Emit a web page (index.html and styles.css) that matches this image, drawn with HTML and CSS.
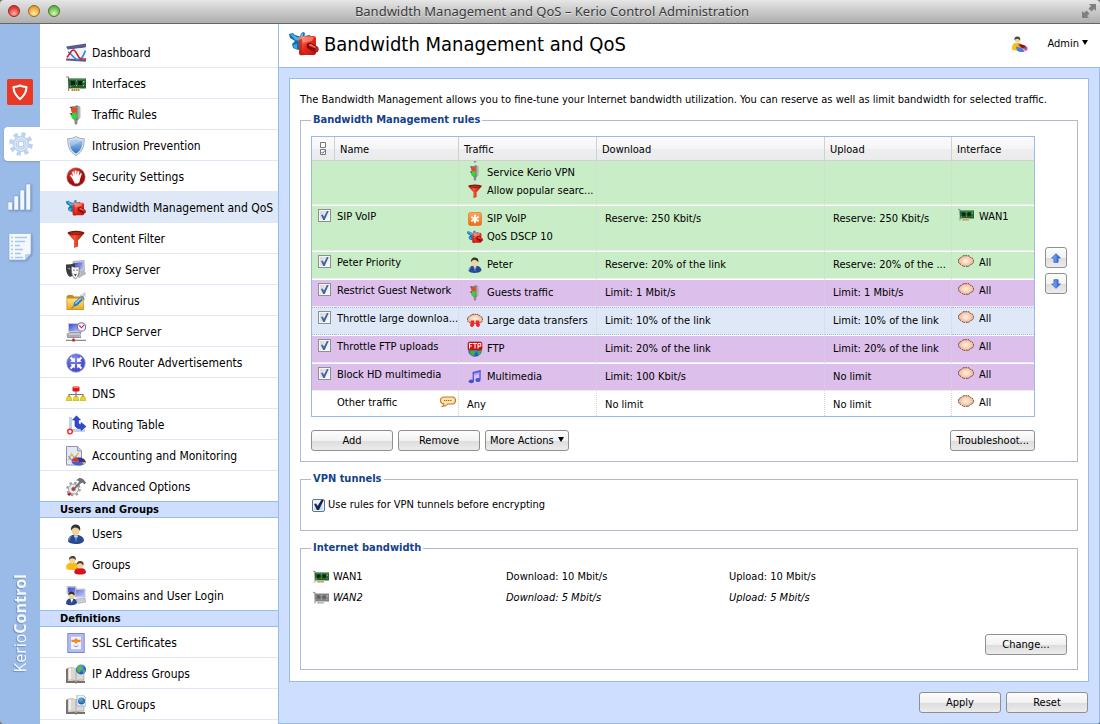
FILE: index.html
```html
<!DOCTYPE html>
<html lang="en">

<head>
  <meta charset="UTF-8" />
  <meta name="viewport" content="width=device-width, initial-scale=1.0" />
  <title>Bandwidth Management and QoS – Kerio Control Administration</title>
  <link rel="stylesheet" href="styles.css">
</head>

<body>
  <!-- icon sprite -->
  <svg class="sprite" aria-hidden="true">
    <defs>
      <linearGradient id="g-blue" x1="0" y1="0" x2="0" y2="1"><stop offset="0" stop-color="#a9cdf2" /><stop offset="1" stop-color="#2f6fbd" /></linearGradient>
      <linearGradient id="g-screen" x1="0" y1="0" x2="1" y2="1"><stop offset="0" stop-color="#3c46d8" /><stop offset="1" stop-color="#b9c4fa" /></linearGradient>
      <linearGradient id="g-red" x1="0" y1="0" x2="1" y2="1"><stop offset="0" stop-color="#ff8a70" /><stop offset=".5" stop-color="#e62a1c" /><stop offset="1" stop-color="#b80f0c" /></linearGradient>
      <linearGradient id="g-funnel" x1="0" y1="0" x2="1" y2="0"><stop offset="0" stop-color="#b01808" /><stop offset=".4" stop-color="#f4543a" /><stop offset="1" stop-color="#9c1204" /></linearGradient>
      <linearGradient id="g-pole" x1="0" y1="0" x2="1" y2="0"><stop offset="0" stop-color="#6e6e6e" /><stop offset="1" stop-color="#d8d8d8" /></linearGradient>
      <linearGradient id="g-folder" x1="0" y1="0" x2="0" y2="1"><stop offset="0" stop-color="#ffe58a" /><stop offset="1" stop-color="#f0a91e" /></linearGradient>
      <linearGradient id="g-orange" x1="0" y1="0" x2="0" y2="1"><stop offset="0" stop-color="#ffa85a" /><stop offset="1" stop-color="#ee6d0d" /></linearGradient>
      <linearGradient id="g-arrow" x1="0" y1="0" x2="1" y2="0"><stop offset="0" stop-color="#8fc0ff" /><stop offset="1" stop-color="#1d55d6" /></linearGradient>
      <radialGradient id="g-cloud"><stop offset="0" stop-color="#fff6ee" /><stop offset="1" stop-color="#f5b48c" /></radialGradient>
      <radialGradient id="g-stop" cx=".4" cy=".3"><stop offset="0" stop-color="#ee4a42" /><stop offset="1" stop-color="#a80b0b" /></radialGradient>
      <radialGradient id="g-violet" cx=".4" cy=".3"><stop offset="0" stop-color="#8a92f4" /><stop offset="1" stop-color="#4a50cc" /></radialGradient>
      <radialGradient id="g-globe" cx=".4" cy=".3"><stop offset="0" stop-color="#8fc4ff" /><stop offset="1" stop-color="#1f5fc8" /></radialGradient>
    </defs>

    <symbol id="i-dashboard" viewBox="0 0 20 20">
      <path d="M0 3.500 20 .5v4L2 7z" fill="#5a5c90" />
      <path d="M2 6.500 20 4.500v12L2 16z" fill="#f4f5fb" />
      <path d="M0 15.500 20 16.500v2.300L0 17.500z" fill="#5a5c90" />
      <path d="M2 9c4 1 5 7.500 10 7.500 4 0 5.500-4 7.500-9" fill="none" stroke="#2c8fd8" stroke-width="1.700" />
      <path d="M1 14.500C4 11 5 7 7.500 7s4 7 7 9H20" fill="none" stroke="#d3202c" stroke-width="1.700" />
    </symbol>

    <symbol id="i-card" viewBox="0 0 20 20">
      <path d="M0 3h2.500v14" fill="none" stroke="#8a8a8a" stroke-width="1.200" />
      <path d="M2 4.500h18v10H3z" fill="#24622f" />
      <path d="M3 5.200h16.500" stroke="#5fa266" stroke-width=".8" />
      <path d="M5 7h4v4H5zM12 7h4v4h-4z" fill="#0f2413" />
      <path d="M10 6.500h1v1h-1zM17 7h1.500v1.500H17zM10 11h1v1h-1zM17 11h1v1h-1zM4 12h1v1H4z" fill="#a9d27a" />
      <path d="M5 14h9v3H5z" fill="#d8c88c" />
      <path d="M6.500 14.500V17M8.500 14.500V17M10.500 14.500V17M12.500 14.500V17" stroke="#8c7a3c" stroke-width=".7" />
    </symbol>

    <symbol id="i-card-off" viewBox="0 0 20 20">
      <path d="M0 3h2.500v14" fill="none" stroke="#8a8a8a" stroke-width="1.200" />
      <path d="M2 4.500h18v10H3z" fill="#848484" />
      <path d="M5 7h4v4H5zM12 7h4v4h-4z" fill="#606060" />
      <path d="M10 6.500h1v1h-1zM17 7h1.500v1.500H17zM10 11h1v1h-1zM17 11h1v1h-1z" fill="#d0d0d0" />
      <path d="M5 14h9v3H5z" fill="#d4d4d4" />
      <path d="M6.500 14.500V17M8.500 14.500V17M10.500 14.500V17M12.500 14.500V17" stroke="#8a8a8a" stroke-width=".7" />
    </symbol>

    <symbol id="i-light" viewBox="0 0 20 20">
      <path d="M3.500 2 7 1.500v4zM3.500 8.500l3.500-1v4.500z" fill="#4a4a4a" />
      <path d="M6 1.500 11.500.5l1 2v12L9 16l-3-3z" fill="#8b8b8b" />
      <path d="m10.500.5 3.500 1.500v10.500L10.500 16z" fill="url(#g-pole)" stroke="#777" stroke-width=".5" />
      <path d="M8.500 15h3v3.500L9.700 20l-1.200-1.500z" fill="#8a8a8a" />
      <circle cx="7.800" cy="5" r="2.800" fill="#f5431d" />
      <circle cx="8.200" cy="11" r="2.900" fill="#2bdc2b" />
    </symbol>

    <symbol id="i-shield" viewBox="0 0 20 20">
      <path d="M10 .5c2.500 1.700 5 2.200 8.300 2.200 0 8-2 13.500-8.300 16.800C3.700 16.200 1.700 10.700 1.700 2.700 5 2.700 7.500 2.200 10 .5z" fill="#dce4ec" stroke="#8d9dae" stroke-width=".8" />
      <path d="M10 2.700c2 1.300 4 1.700 6.600 1.800-.2 6.500-1.900 10.500-6.600 13.100C5.300 15 3.600 11 3.400 4.500 6 4.400 8 4 10 2.700z" fill="url(#g-blue)" />
      <path d="M10 2.700c2 1.300 4 1.700 6.600 1.800L4.500 11C3.800 9 3.500 7 3.400 4.500 6 4.400 8 4 10 2.700z" fill="#fff" opacity=".25" />
    </symbol>

    <symbol id="i-hand" viewBox="0 0 20 20">
      <circle cx="10" cy="10" r="9.200" fill="url(#g-stop)" stroke="#8d8080" stroke-width=".6" />
      <path d="M6 11 4 8.600l1.300-1L7 9.500 6.100 4.700l1.600-.3 1.100 4-.1-5h1.700l.3 5 1-4.500 1.600.3-.5 4.800 1.700-3 1.400.8-1.900 5.300-.5 2.800-1.500 1.700H8.800z" fill="#fff" />
    </symbol>

    <symbol id="i-valve" viewBox="0 0 30 24">
      <path d="m0 2 4-1 2 2 5 1.500 1-3L14 0l2 1-.5 3 5-1 2 2v6L9 18l-5-2-1-4 3-3-5-3z" fill="#156fae" />
      <path d="m1.500 2.500 2-.5 4 3 5 1-1 3-5-1z" fill="#49b4e6" />
      <path d="m4 13 4-1v5l-3-1z" fill="#3fa5dc" />
      <path d="M12.500 1.500 14 1v5h-2z" fill="#5fc2ee" />
      <rect x="10" y="4" width="17" height="19" rx="2.500" fill="url(#g-red)" />
      <path d="M10 8v13.500q0 1.500 1.800 2l4-.5-3-3V6.500z" fill="#b3150f" opacity=".6" />
      <path d="M12 5h13l-2 4-9 2z" fill="#ffb39c" opacity=".5" />
      <path d="M18.500 11.500c2-1.500 4-.5 5 .5l5 2.500c1.500 1 1.500 4.500 0 5.500-1 .6-2 .3-3 0l-6-3c-2-1-2.500-4-1-5.500z" fill="#8d0a0c" />
      <path d="M20 12.500c2-1 3 0 4 .7l4 2-.6 1.500-7.400-3z" fill="#e4685c" />
      <ellipse cx="27.600" cy="17.200" rx="1.600" ry="2.500" fill="#b9251f" />
    </symbol>

    <symbol id="i-funnel" viewBox="0 0 20 20">
      <path d="M1.500 4 8 11.500V19l4-1.500v-6L18.500 4z" fill="url(#g-funnel)" />
      <ellipse cx="10" cy="3.800" rx="8.500" ry="2" fill="#7d1105" />
      <ellipse cx="10" cy="4.100" rx="6.500" ry="1" fill="#b52c18" />
    </symbol>

    <symbol id="i-proxy" viewBox="0 0 20 20">
      <path d="M7 1.500 18 .5l.5 10.500L8 12.500z" fill="#c9ccd4" stroke="#8b8f99" stroke-width=".6" />
      <path d="m8.500 3 8-.8.3 7.400-7.800 1z" fill="url(#g-screen)" />
      <path d="m11 14 7-2.500 2 2-7 4z" fill="#b9bcc6" stroke="#868992" stroke-width=".5" />
      <path d="M0 4.500q5 0 9-1.500v7c0 4-2 6-5 7-3-2-4.500-6-4-12.500z" fill="#3b3b42" />
      <path d="m1.500 8 2.500.5v1zM5.500 8.500 8 7.500l-2 2z" fill="#fff" />
      <path d="M5.500 6.500q4 1.500 7.500 0c.8 6-.4 10-3.500 12.500C6 16.500 4.800 12 5.500 6.500z" fill="#f7f7f9" stroke="#55555c" stroke-width=".7" />
      <path d="M6.800 9.800h2l-.6 1.200zM10.200 9.800h2L11 11zM7.800 13.500q1.600 1.300 3.200 0l-1.600 3z" fill="#2d2d33" />
    </symbol>

    <symbol id="i-antivirus" viewBox="0 0 20 20">
      <path d="M.5 5.500 2 4h4.500L8 5.500h10V19H.5z" fill="#c98a1a" />
      <path d="M1.200 7.500h16.300v10.800H1.200z" fill="url(#g-folder)" />
      <path d="m7 16 1.200-4.500L14 6l3 3-5.700 5.500z" fill="#2a7fc4" />
      <path d="m8.800 12 5.500-5.200 1 1-5.500 5.300z" fill="#9fd6f6" />
      <path d="M7 16 5.500 17.500M14.500 4.500l4 4M16.200 6l2.800-3.500" stroke="#7b8394" stroke-width="1.300" />
      <path d="m14 5 5-4.500 1 5z" fill="#c9d5f2" opacity=".9" />
    </symbol>

    <symbol id="i-dhcp" viewBox="0 0 20 20">
      <path d="M2 1h13v9H2z" fill="#c9ccd4" />
      <path d="M3 2h11v7H3z" fill="url(#g-screen)" />
      <path d="m1 12 3-1.500h11l-1 2.500 1 2.500H1.500z" fill="#c6c8ce" stroke="#77797f" stroke-width=".7" />
      <path d="M2 14h11" stroke="#8d8f96" />
      <path d="M7.500 15.500V18M0 18.300h20" stroke="#8a8a90" stroke-width="1.300" />
      <path d="M6.300 17h2.500v2.500H6.300z" fill="#d41e14" />
      <circle cx="15.500" cy="5" r="4.200" fill="#f3f4ff" stroke="#6a70b8" stroke-width="1.100" />
      <path d="m13.300 3.500 2.200 2.300 2.800-3" fill="none" stroke="#d8262a" stroke-width="1.100" />
    </symbol>

    <symbol id="i-ipv6" viewBox="0 0 20 20">
      <circle cx="10" cy="10" r="9.300" fill="url(#g-violet)" stroke="#a5a9d8" stroke-width=".8" />
      <path d="m9 9-4.500-.3 1.300-1.400-2-2L5.300 3.800l2 2 1.400-1.300zM11 9l.3-4.500 1.400 1.300 2-2 1.500 1.500-2 2 1.300 1.400zM9 11l-.3 4.500-1.400-1.300-2 2-1.500-1.500 2-2-1.300-1.400zM11 11l4.500.3-1.300 1.400 2 2-1.500 1.500-2-2-1.400 1.300z" fill="#fff" />
    </symbol>

    <symbol id="i-dns" viewBox="0 0 20 20">
      <path d="M10 6v8M3 13.500V10.500h14v3" fill="none" stroke="#77777c" stroke-width="1.200" />
      <rect x="6.500" y="2.500" width="7" height="5" rx="1.200" fill="#e0141a" />
      <path d="M7.500 3.500h5" stroke="#ff8c88" />
      <path d="M1.300 12.500h3.400l1.300 4H0zM8.300 12.500h3.400l1.300 4H7zM15.300 12.500h3.400l1.300 4h-6z" fill="#ecd91a" stroke="#b8a514" stroke-width=".6" />
    </symbol>

    <symbol id="i-routing" viewBox="0 0 20 20">
      <path d="M4.500 2v14M4 15.500h15" stroke="#c3d1ee" stroke-width="3" />
      <path d="M10.500.8 14.500 5h-2v3.500L15 10V7.500l5 4-5 4v-2h-3.500L9 11V5H6.500z" fill="#2f49d2" stroke="#1b2f9c" stroke-width=".6" />
      <circle cx="4" cy="16.500" r="2.300" fill="#fff" stroke="#ee2f2f" stroke-width="1.500" />
    </symbol>

    <symbol id="i-accounting" viewBox="0 0 20 20">
      <path d="M.5.500h11L15.500 5v14H.5z" fill="#e4e7f4" stroke="#8487a4" stroke-width=".9" />
      <path d="M11.500.5V5h4" fill="#cdd1e4" stroke="#8487a4" stroke-width=".8" />
      <path d="m2.500 14 3-6 3 4 4-5" fill="none" stroke="#d8be3a" stroke-width="1.400" />
      <path d="m2.500 10 3 4 4-3 4 2" fill="none" stroke="#7c86e8" stroke-width="1.200" />
      <path d="M5.500 15.500a7 4.500 0 0 1 6-4l1.500 4.500z" fill="#d83426" />
      <path d="M11.500 11.500c4-.5 8 1.500 8.500 5l-7-.5z" fill="#3b2f8c" />
      <path d="M5.500 15.500 13 16l7 .5c-1 2-4 3-7 3-4 0-7-1.500-7.500-4z" fill="#3a62d4" />
      <path d="m16 16.200 4 .3c-.5 1-1.200 1.600-2.300 2z" fill="#f0c62a" />
    </symbol>

    <symbol id="i-advanced" viewBox="0 0 20 20">
      <circle cx="7.500" cy="12" r="6.300" fill="none" stroke="#9a9a9a" stroke-width="2" stroke-dasharray="2.400 2.550" />
      <circle cx="7.500" cy="12" r="5" fill="#ececec" stroke="#8a8a8a" stroke-width=".8" />
      <circle cx="7.500" cy="12" r="1.900" fill="#d42b2b" stroke="#888" stroke-width=".8" />
      <path d="m10 3.500 3-2.500q3-.5 4.500 1.500l2.500 3-1.500 2-2-2-1.500.7-5.500 5.300-1.300-1.200 5-5.500-1.200-1.300z" fill="#707073" />
      <path d="m1 17 3-1.500 1.500 1.500L3 19z" fill="#b91717" />
    </symbol>

    <symbol id="i-user" viewBox="0 0 20 20">
      <path d="M2 17.500c0-4 2-6.500 6-6.500h3c4 0 7 2.500 7 6-1.500 2.500-5 3-8.500 3S3 19 2 17.500z" fill="#2a4a8c" />
      <path d="M8 11.500 10 17l2-5.500z" fill="#fff" />
      <path d="m9.500 12.500 1 0 .7 4-1.200 2-1-2z" fill="#2c7ad8" />
      <ellipse cx="9.500" cy="6.800" rx="4" ry="4.800" fill="#f3d39c" />
      <path d="M5 6.500C4.500 2.500 7 .3 10 .5c3.500.2 5 3 4 6.500-1-2.500-3-3.500-5-3.500-1.500.2-3 1.500-4 3z" fill="#30352f" />
      <path d="M3 16.500c0-2 .8-3.300 2.200-4" fill="none" stroke="#7fa4e4" />
    </symbol>

    <symbol id="i-groups" viewBox="0 0 22 21">
      <path d="M0 14c0-4 2-6 5.500-6H9c3 0 5 2 5 5.500-1 2-4 2.500-7 2.500s-6-.5-7-2z" fill="#f8bd16" />
      <circle cx="7" cy="5" r="3.600" fill="#f3d39c" />
      <path d="M3.300 4.800C3 2 5 .4 7.300.5c2.700.1 4.200 2 3.200 4.700-1-1.700-2.500-2.200-4-2.100-1.200.1-2.300.8-3.200 1.700z" fill="#3d403c" />
      <path d="M9 19c0-3.500 2-5 5-5h3c3 0 5 1.500 5 5-1 1.500-3.500 2-6.500 2S10 20.500 9 19z" fill="#d3151b" />
      <circle cx="15.500" cy="10.500" r="3.600" fill="#f3cfa0" />
      <path d="M11.700 10.500c-.3-2.800 1.600-4.600 4-4.500 2.800.1 4.500 2.200 3.300 5-1-1.800-2.500-2.400-4-2.300-1.300.1-2.400.8-3.300 1.800z" fill="#5a3c28" />
    </symbol>

    <symbol id="i-domains" viewBox="0 0 20 20">
      <path d="M1 .5h9v7H1zM9 3h10v8H9z" fill="#d4d7e0" stroke="#8e93a4" stroke-width=".5" />
      <path d="M2 1.500h7v5H2zM10 4h8v6h-8z" fill="url(#g-screen)" />
      <path d="m10 13 9-1 1 4-8 1.500z" fill="#c9ccd6" stroke="#9195a2" stroke-width=".5" />
      <path d="M0 17.500c0-3 1.500-5 4.500-5h2c3 0 4.500 2 4.500 4.500-1 1.800-3 2.200-5.500 2.200S1 19 0 17.500z" fill="#2a4a8c" />
      <path d="M4.300 12.800 5.800 17l1.400-4.200z" fill="#fff" />
      <circle cx="5.500" cy="9.500" r="3" fill="#f3d39c" />
      <path d="M2.300 9.500c-.2-2.500 1.300-4 3.400-3.900 2.400.1 3.600 1.900 2.800 4.200-1-1.300-2-1.800-3.300-1.700-1.100.1-2.100.6-2.900 1.400z" fill="#30352f" />
    </symbol>

    <symbol id="i-ssl" viewBox="0 0 19 22">
      <rect x=".5" y=".5" width="18" height="21" fill="#a9b3f2" stroke="#7480d0" />
      <rect x="2" y="2" width="15" height="18" fill="none" stroke="#d5dbff" stroke-dasharray="1 1" />
      <rect x="4" y="4" width="11" height="14" fill="#f1f3ff" />
      <path d="M4.500 7.500h3l2-2 2 2h3v2.500h-3l-2 2-2-2h-3z" fill="#f58a18" />
      <path d="m7 14 2.500 1.200L12 14" fill="none" stroke="#757ba8" stroke-width=".9" />
    </symbol>

    <symbol id="i-book" viewBox="0 0 20 20">
      <path d="m0 5 2-1v13l7-.5 1 1.500 1-1.500 8 .5v2H11l-1 .8-1-.8H0z" fill="#77726d" />
      <path d="M2 4q5-1.500 8 .8V17q-3-1.800-8-.8z" fill="#f2f0ec" stroke="#8c8782" stroke-width=".5" />
      <path d="M18 4q-5-1.500-8 .8V17q3-1.800 8-.8z" fill="#dcd8d2" stroke="#8c8782" stroke-width=".5" />
      <path d="M8 4.500v12M6 4v12" stroke="#bdb8b1" stroke-width=".9" />
    </symbol>

    <symbol id="i-ipgroups" viewBox="0 0 20 20">
      <use href="#i-book" width="20" height="20" />
      <circle cx="15" cy="5.500" r="5" fill="url(#g-globe)" />
      <path d="m12 2 3-1 1.500 2L14 5l.5 2.500L13 9l-2-3zM17 5.500l2.500.5-1.500 3.300-1.500-1z" fill="#58b83a" />
    </symbol>

    <symbol id="i-urlgroups" viewBox="0 0 20 20">
      <use href="#i-book" width="20" height="20" />
      <path d="M11 0h6l3 3v8h-9z" fill="#eef4ff" stroke="#7ea0d4" stroke-width=".7" />
      <circle cx="15.500" cy="6" r="3.500" fill="url(#g-globe)" />
      <path d="m13 4.500 2-1.500 1 1.500-1.500 1.500.3 2zM16.500 6.500l2 .2-1.500 2z" fill="#58b83a" />
    </symbol>

    <symbol id="i-sip" viewBox="0 0 16 16">
      <rect x="1.500" y="1.500" width="13" height="13" rx="2" fill="url(#g-orange)" stroke="#dd6a10" stroke-width=".6" />
      <path d="M8 3.800v8.400M4.300 5.900l7.400 4.200M4.300 10.100l7.400-4.200" stroke="#fff" stroke-width="1.800" />
    </symbol>

    <symbol id="i-cloud" viewBox="0 0 16 16">
      <path d="M3.300 4.500Q5 2 8 2.800q3-.8 4.700 1.700 2.900.7 2.800 3.500.1 2.800-2.800 3.500Q11 14 8 13.200 5 14 3.300 11.500.4 10.800.5 8 .4 5.200 3.300 4.500z" fill="url(#g-cloud)" stroke="#4e3c34" stroke-dasharray="1.600 .8" />
    </symbol>

    <symbol id="i-transfers" viewBox="0 0 16 16">
      <path d="M3.300 3Q5 .6 8 1.500q3-.9 4.700 1.500 2.900.7 2.800 3.500.1 2.800-2.800 3.300-4.700 1-9.400 0Q.4 9.300.5 6.500.4 3.700 3.300 3z" fill="url(#g-cloud)" stroke="#4e3c34" stroke-dasharray="1.600 .8" />
      <path d="M7.200 7.500v3l-.2 2L5.500 14H4.300L2.800 12l1-1.500v-3zM12.200 7.500v3l1 1.500-1.500 2h-1.200L9 12.500l-.2-2v-3z" fill="#f5232b" />
    </symbol>

    <symbol id="i-ftp" viewBox="0 0 16 16">
      <circle cx="8" cy="9" r="6.800" fill="url(#g-globe)" />
      <path d="m3 9 4 .5 1 3-1.500 2.800L3 13zM10.500 10l3.800-1-.8 4-2.500 1.500z" fill="#47ad34" />
      <rect x="1" y="1" width="14" height="8" rx="1.500" fill="#cf1616" stroke="#a00f0f" stroke-width=".6" />
      <path d="M2.500 7.500v-5h3M2.500 5h2.300M6 2.500h4M8 2.500v5M11 7.500v-5h2.800v2.700H11" fill="none" stroke="#fff" />
    </symbol>

    <symbol id="i-music" viewBox="0 0 16 16">
      <path d="M5.500 3 13.500 1v2L7 4.800z" fill="#5560e6" />
      <path d="M6.300 3v9M13 1.500v8.800" stroke="#4650d8" stroke-width="1.300" />
      <path d="m6.300 6 6.700-1.800" stroke="#8f97f4" />
      <ellipse cx="4.300" cy="12.300" rx="2.600" ry="1.900" fill="#4650d8" />
      <ellipse cx="11" cy="11" rx="2.600" ry="1.900" fill="#4650d8" />
    </symbol>

    <symbol id="i-comment" viewBox="0 0 16 16">
      <path d="M4 3h8.500q3 .3 3 3.500t-3 3.500H8q-2 2.300-5.500 2.500Q4 11.500 4 10 .5 9.500.5 6.500T4 3z" fill="#ffe3a3" stroke="#b8793a" stroke-width="1.100" />
      <path d="M4 6.500h8" stroke="#a1662c" stroke-width="1.200" stroke-dasharray="1.200 .7" />
    </symbol>

    <symbol id="i-admin" viewBox="0 0 16 16">
      <path d="M0 13.500C0 9 1 7 4 7h3c2.500 0 3.500 1.500 3.500 4.500l-3 3q-5 .5-7.500-1z" fill="#f8bd16" />
      <circle cx="5.300" cy="4" r="2.700" fill="#f3d39c" />
      <path d="M2.400 4C2.200 1.700 3.700.4 5.500.5c2 .1 3.300 1.600 2.500 3.900-.8-1.200-1.800-1.700-3-1.600-1 .1-1.900.6-2.600 1.200z" fill="#3d403c" />
      <path d="M6 8.500q5-1.500 9.500 3L10 12.200z" fill="#8c1420" />
      <path d="M4 10.500 10 12l3 3.500q-3 1-6 .3-3-1.500-3-5.300z" fill="#4e7be4" />
      <path d="m10 12 5.500-.5q.5 2-1.500 3.500z" fill="#c04bb0" />
    </symbol>

    <symbol id="i-up" viewBox="0 0 12 12">
      <path d="M6 .8 11.300 6H8.500v5.200h-5V6H.7z" fill="url(#g-arrow)" stroke="#2450b4" stroke-width=".8" />
    </symbol>
    <symbol id="i-down" viewBox="0 0 12 12">
      <path d="M6 11.200.7 6h2.800V.8h5V6h2.800z" fill="url(#g-arrow)" stroke="#2450b4" stroke-width=".8" />
    </symbol>
  </svg>

  <div class="window">
    <header class="titlebar">
      <div class="lights">
        <span class="light light-red"></span>
        <span class="light light-yellow"></span>
        <span class="light light-green"></span>
      </div>
      <div class="window-title">Bandwidth Management and QoS – Kerio Control Administration</div>
      <svg class="expand" viewBox="0 0 14 14" aria-hidden="true">
        <path d="M7 0h7v7l-2-2-2.500 2.500-3-3L9 2zM0 7l2 2 2.500-2.500 3 3L5 12l2 2H0z" fill="#808080" />
      </svg>
    </header>

    <div class="app">
      <div class="rail">
        <div class="rail-icons">
          <a class="rail-logo" href="#" aria-label="Kerio Control">
            <svg viewBox="0 0 26 26"><path d="M13 6.500c2 1.100 4 1.400 6.500 1.600 0 5-2 8.500-6.500 12-4.500-3.500-6.500-7-6.500-12C9 7.900 11 7.600 13 6.500z" fill="none" stroke="#fff" stroke-width="2" stroke-linejoin="round" /></svg>
          </a>
          <a class="rail-tab" href="#" aria-label="Configuration">
            <svg viewBox="0 0 24 24">
              <circle cx="12" cy="12" r="9.800" fill="none" stroke="#bcd2f0" stroke-width="4" stroke-dasharray="4.200 3.500" />
              <circle cx="12" cy="12" r="6.200" fill="#e2ecf9" stroke="#bcd2f0" stroke-width="4" />
              <circle cx="12" cy="12" r="6" fill="none" stroke="#dbe7f7" stroke-width="1.500" />
              <circle cx="12" cy="12" r="3" fill="#fff" stroke="#a3c0e6" />
            </svg>
          </a>
          <a class="rail-link" href="#" aria-label="Status">
            <svg viewBox="0 0 24 28"><path d="M0 19h4.500v8H0zM6 13h4.500v14H6zM12 7h4.500v20H12zM18 1h4.500v26H18z" fill="#f2f7fd" stroke="#7f9fca" stroke-width=".5" /></svg>
          </a>
          <a class="rail-link" href="#" aria-label="Logs">
            <svg viewBox="0 0 24 28">
              <path d="M1 .5h22v20L17 27H1z" fill="#f3f8fd" stroke="#8facd3" stroke-width=".6" />
              <path d="M17 27v-5.500l6-1z" fill="#b9d2ef" />
              <path d="M3 4.500h2M7 4.500h12M3 8.500h2M7 8.500h10M3 12.500h2M7 12.500h5M3 16.500h2M7 16.500h8M3 20.500h2M7 20.500h6M3 24.500h2M7 24.500h8" stroke="#a9c8ea" stroke-width="1.700" />
            </svg>
          </a>
        </div>
        <div class="brand">Kerio<b>Control</b></div>
      </div>

      <nav class="sidebar">
        <ul class="nav-list">
          <li><a class="nav-item" href="#"><svg><use href="#i-dashboard" /></svg>Dashboard</a></li>
          <li><a class="nav-item" href="#"><svg><use href="#i-card" /></svg>Interfaces</a></li>
          <li><a class="nav-item" href="#"><svg><use href="#i-light" /></svg>Traffic Rules</a></li>
          <li><a class="nav-item" href="#"><svg><use href="#i-shield" /></svg>Intrusion Prevention</a></li>
          <li><a class="nav-item" href="#"><svg><use href="#i-hand" /></svg>Security Settings</a></li>
          <li><a class="nav-item current" href="#" aria-current="page"><svg><use href="#i-valve" /></svg>Bandwidth Management and QoS</a></li>
          <li><a class="nav-item" href="#"><svg><use href="#i-funnel" /></svg>Content Filter</a></li>
          <li><a class="nav-item" href="#"><svg><use href="#i-proxy" /></svg>Proxy Server</a></li>
          <li><a class="nav-item" href="#"><svg><use href="#i-antivirus" /></svg>Antivirus</a></li>
          <li><a class="nav-item" href="#"><svg><use href="#i-dhcp" /></svg>DHCP Server</a></li>
          <li><a class="nav-item" href="#"><svg><use href="#i-ipv6" /></svg>IPv6 Router Advertisements</a></li>
          <li><a class="nav-item" href="#"><svg><use href="#i-dns" /></svg>DNS</a></li>
          <li><a class="nav-item" href="#"><svg><use href="#i-routing" /></svg>Routing Table</a></li>
          <li><a class="nav-item" href="#"><svg><use href="#i-accounting" /></svg>Accounting and Monitoring</a></li>
          <li><a class="nav-item" href="#"><svg><use href="#i-advanced" /></svg>Advanced Options</a></li>
        </ul>
        <h2 class="nav-heading">Users and Groups</h2>
        <ul class="nav-list">
          <li><a class="nav-item" href="#"><svg><use href="#i-user" /></svg>Users</a></li>
          <li><a class="nav-item" href="#"><svg><use href="#i-groups" /></svg>Groups</a></li>
          <li><a class="nav-item" href="#"><svg><use href="#i-domains" /></svg>Domains and User Login</a></li>
        </ul>
        <h2 class="nav-heading">Definitions</h2>
        <ul class="nav-list">
          <li><a class="nav-item" href="#"><svg><use href="#i-ssl" /></svg>SSL Certificates</a></li>
          <li><a class="nav-item" href="#"><svg><use href="#i-ipgroups" /></svg>IP Address Groups</a></li>
          <li><a class="nav-item" href="#"><svg><use href="#i-urlgroups" /></svg>URL Groups</a></li>
          <li class="nav-more"></li>
        </ul>
      </nav>

      <main class="main">
        <div class="page-head">
          <svg class="page-icon" aria-hidden="true"><use href="#i-valve" /></svg>
          <h1>Bandwidth Management and QoS</h1>
          <button class="admin" type="button">
            <svg class="icon" aria-hidden="true"><use href="#i-admin" /></svg>
            <span>Admin</span>
            <span class="caret"></span>
          </button>
        </div>

        <form class="content">
          <div class="panel">
            <p class="intro">The Bandwidth Management allows you to fine-tune your Internet bandwidth utilization. You can reserve as well as limit bandwidth for selected traffic.</p>

            <fieldset class="group rules">
              <legend>Bandwidth Management rules</legend>
              <div class="rules-layout">
                <div class="grid">
                  <table>
                    <colgroup>
                      <col class="col-check">
                      <col class="col-name">
                      <col class="col-traffic">
                      <col class="col-download">
                      <col class="col-upload">
                      <col class="col-interface">
                    </colgroup>
                    <thead>
                      <tr>
                        <th class="th-check" aria-label="Enabled">
                          <svg viewBox="0 0 7 13" aria-hidden="true"><path d="M.5.5h5v5h-5zM.5 7.500h5v5h-5z" fill="#fff" stroke="#777" /><path d="m1.500 10 1.200 1.300L5 8.500" fill="none" stroke="#44639f" /></svg>
                        </th>
                        <th>Name</th>
                        <th>Traffic</th>
                        <th>Download</th>
                        <th>Upload</th>
                        <th>Interface</th>
                      </tr>
                    </thead>
                    <tbody>
                      <tr class="reserve scrolled">
                        <td class="check"></td>
                        <td class="name"></td>
                        <td>
                          <div class="stack">
                            <div class="item"><svg class="icon"><use href="#i-light" /></svg></div>
                            <div class="item"><svg class="icon"><use href="#i-light" /></svg><span>Service Kerio VPN</span></div>
                            <div class="item"><svg class="icon"><use href="#i-funnel" /></svg><span>Allow popular searc...</span></div>
                          </div>
                        </td>
                        <td></td>
                        <td></td>
                        <td class="iface"></td>
                      </tr>
                      <tr class="reserve">
                        <td class="check"><input type="checkbox" id="r1" checked></td>
                        <td class="name"><label for="r1">SIP VoIP</label></td>
                        <td>
                          <div class="item"><svg class="icon"><use href="#i-sip" /></svg><span>SIP VoIP</span></div>
                          <div class="item"><svg class="icon"><use href="#i-valve" /></svg><span>QoS DSCP 10</span></div>
                        </td>
                        <td>Reserve: 250 Kbit/s</td>
                        <td>Reserve: 250 Kbit/s</td>
                        <td class="iface"><div class="item"><svg class="icon"><use href="#i-card" /></svg><span>WAN1</span></div></td>
                      </tr>
                      <tr class="reserve">
                        <td class="check"><input type="checkbox" id="r2" checked></td>
                        <td class="name"><label for="r2">Peter Priority</label></td>
                        <td><div class="item"><svg class="icon"><use href="#i-user" /></svg><span>Peter</span></div></td>
                        <td>Reserve: 20% of the link</td>
                        <td>Reserve: 20% of the ...</td>
                        <td class="iface"><div class="item"><svg class="icon"><use href="#i-cloud" /></svg><span>All</span></div></td>
                      </tr>
                      <tr class="limit">
                        <td class="check"><input type="checkbox" id="r3" checked></td>
                        <td class="name"><label for="r3">Restrict Guest Network</label></td>
                        <td><div class="item"><svg class="icon"><use href="#i-light" /></svg><span>Guests traffic</span></div></td>
                        <td>Limit: 1 Mbit/s</td>
                        <td>Limit: 1 Mbit/s</td>
                        <td class="iface"><div class="item"><svg class="icon"><use href="#i-cloud" /></svg><span>All</span></div></td>
                      </tr>
                      <tr class="selected">
                        <td class="check"><input type="checkbox" id="r4" checked></td>
                        <td class="name"><label for="r4">Throttle large downloa...</label></td>
                        <td><div class="item"><svg class="icon"><use href="#i-transfers" /></svg><span>Large data transfers</span></div></td>
                        <td>Limit: 10% of the link</td>
                        <td>Limit: 10% of the link</td>
                        <td class="iface"><div class="item"><svg class="icon"><use href="#i-cloud" /></svg><span>All</span></div></td>
                      </tr>
                      <tr class="limit">
                        <td class="check"><input type="checkbox" id="r5" checked></td>
                        <td class="name"><label for="r5">Throttle FTP uploads</label></td>
                        <td><div class="item"><svg class="icon"><use href="#i-ftp" /></svg><span>FTP</span></div></td>
                        <td>Limit: 20% of the link</td>
                        <td>Limit: 20% of the link</td>
                        <td class="iface"><div class="item"><svg class="icon"><use href="#i-cloud" /></svg><span>All</span></div></td>
                      </tr>
                      <tr class="limit">
                        <td class="check"><input type="checkbox" id="r6" checked></td>
                        <td class="name"><label for="r6">Block HD multimedia</label></td>
                        <td><div class="item"><svg class="icon"><use href="#i-music" /></svg><span>Multimedia</span></div></td>
                        <td>Limit: 100 Kbit/s</td>
                        <td>No limit</td>
                        <td class="iface"><div class="item"><svg class="icon"><use href="#i-cloud" /></svg><span>All</span></div></td>
                      </tr>
                      <tr class="other">
                        <td class="check"></td>
                        <td class="name"><div class="item noted"><span>Other traffic</span><svg class="icon"><use href="#i-comment" /></svg></div></td>
                        <td>Any</td>
                        <td>No limit</td>
                        <td>No limit</td>
                        <td class="iface"><div class="item"><svg class="icon"><use href="#i-cloud" /></svg><span>All</span></div></td>
                      </tr>
                    </tbody>
                  </table>
                </div>
                <div class="order">
                  <button class="btn btn-icon" type="button" aria-label="Move up"><svg><use href="#i-up" /></svg></button>
                  <button class="btn btn-icon" type="button" aria-label="Move down"><svg><use href="#i-down" /></svg></button>
                </div>
                <div class="toolbar">
                  <button class="btn" type="button">Add</button>
                  <button class="btn" type="button">Remove</button>
                  <button class="btn" type="button">More Actions <span class="caret"></span></button>
                  <button class="btn push" type="button">Troubleshoot...</button>
                </div>
              </div>
            </fieldset>

            <fieldset class="group vpn">
              <legend>VPN tunnels</legend>
              <label class="option"><input type="checkbox" checked>Use rules for VPN tunnels before encrypting</label>
            </fieldset>

            <fieldset class="group bandwidth">
              <legend>Internet bandwidth</legend>
              <div class="links">
                <div class="link-row">
                  <div class="item"><svg class="icon"><use href="#i-card" /></svg><span>WAN1</span></div>
                  <div>Download: 10 Mbit/s</div>
                  <div>Upload: 10 Mbit/s</div>
                </div>
                <div class="link-row backup">
                  <div class="item"><svg class="icon"><use href="#i-card-off" /></svg><span>WAN2</span></div>
                  <div>Download: 5 Mbit/s</div>
                  <div>Upload: 5 Mbit/s</div>
                </div>
              </div>
              <div class="toolbar">
                <button class="btn push" type="button">Change...</button>
              </div>
            </fieldset>
          </div>

          <div class="actions">
            <button class="btn" type="button">Apply</button>
            <button class="btn" type="reset">Reset</button>
          </div>
        </form>
      </main>
    </div>
  </div>
</body>

</html>
```

FILE: styles.css
```css
* {
  margin: 0;
  padding: 0;
  box-sizing: border-box;
}

html, body {
  height: 100%;
}

body {
  background: #6d6d6d;
  color: #000;
  font-family: "DejaVu Sans Condensed", "Noto Sans", sans-serif;
  font-size: 11px;
  line-height: 14px;
  overflow: hidden;
}

button, input {
  font: inherit;
  color: inherit;
}

a {
  color: inherit;
  text-decoration: none;
}

.sprite {
  position: absolute;
  width: 0;
  height: 0;
}

.window {
  height: 100vh;
  display: flex;
  flex-direction: column;
  border-radius: 4px;
  overflow: hidden;
}

/* title bar */

.titlebar {
  flex: none;
  height: 24px;
  display: grid;
  grid-template-columns: 1fr auto 1fr;
  align-items: center;
  padding: 0 4px 2px 8px;
  background: linear-gradient(#e6e6e6, #cfcfcf 40%, #aeaeae);
  border-bottom: 1px solid #666;
}

.lights {
  display: flex;
  gap: 8px;
}

.light {
  width: 12px;
  height: 12px;
  border-radius: 50%;
  border: 1px solid #6b5b5b;
}

.light-red {
  background: radial-gradient(circle at 50% 75%, #ffb0a8, #e8473f 55%, #b9201c);
  border-color: #8c2a27;
}

.light-yellow {
  background: radial-gradient(circle at 50% 75%, #fff0a8, #f4b13c 55%, #c9801c);
  border-color: #94682a;
}

.light-green {
  background: radial-gradient(circle at 50% 75%, #d8f8b8, #7cc258 55%, #4c9a38);
  border-color: #44772f;
}

.window-title {
  font-family: "Noto Sans", sans-serif;
  font-size: 13px;
  line-height: 20px;
  color: #3a3a3a;
  text-shadow: 0 1px 0 #e6e6e6;
}

.expand {
  width: 14px;
  height: 14px;
  justify-self: end;
}

.app {
  flex: 1;
  min-height: 0;
  display: grid;
  grid-template-columns: 40px 239px 1fr;
}

/* left rail */

.rail {
  display: flex;
  flex-direction: column;
  justify-content: space-between;
  padding: 55px 0 51px;
  background: #9abbe8;
}

.rail-icons {
  display: flex;
  flex-direction: column;
  align-items: center;
  gap: 22px;
}

.rail-icons svg {
  display: block;
}

.rail-logo {
  width: 26px;
  height: 26px;
  border-radius: 2px;
  background: #e93824;
}

.rail-tab {
  align-self: flex-end;
  width: 36px;
  height: 34px;
  padding: 5px;
  border-radius: 4px 0 0 4px;
  background: #fff;
  box-shadow: 0 1px 2px #7d9cc9;
}

.rail-tab svg {
  width: 24px;
  height: 24px;
}

.rail-link svg {
  width: 24px;
  height: 28px;
  filter: drop-shadow(1px 1px 1px #7292c2);
}

.brand {
  align-self: center;
  writing-mode: vertical-rl;
  transform: rotate(180deg);
  font-family: "Open Sans", sans-serif;
  font-size: 16px;
  line-height: 20px;
  color: #f4f8fe;
  text-shadow: -1px -1px 1px #7393c2;
}

/* navigation */

.sidebar {
  padding-top: 13px;
  background: #fff;
  border-right: 1px solid #99bbe8;
  overflow: hidden;
}

.nav-list {
  list-style: none;
}

.nav-item {
  display: flex;
  align-items: center;
  gap: 6px;
  height: 31px;
  padding: 2px 0 0 26px;
  border-bottom: 1px solid #dfe8f6;
  font-size: 12px;
  white-space: nowrap;
}

.nav-item svg {
  width: 20px;
  height: 20px;
}

.nav-item.current {
  background: #dfe8f6;
}

.nav-list li:last-child .nav-item {
  height: 30px;
  border-bottom: 0;
}

.nav-heading {
  height: 17px;
  padding-left: 20px;
  background: #cddeff;
  border: solid #99bbe8;
  border-width: 1px 0;
  font-size: 11px;
  line-height: 15px;
}

/* page head */

.main {
  display: flex;
  flex-direction: column;
  min-width: 0;
}

.page-head {
  flex: none;
  display: flex;
  align-items: center;
  gap: 5px;
  height: 44px;
  padding: 0 12px 4px 10px;
  background: #fff;
  border-bottom: 1px solid #99bbe8;
}

.page-icon {
  width: 30px;
  height: 24px;
}

h1 {
  font-size: 20px;
  font-weight: normal;
  line-height: 24px;
}

.admin {
  display: flex;
  align-items: center;
  gap: 3px;
  margin-left: auto;
  border: 0;
  background: none;
}

.admin .icon {
  margin-right: 16px;
}

.icon {
  flex: none;
  display: block;
  width: 16px;
  height: 16px;
}

.caret {
  display: inline-block;
  margin-bottom: 3px;
  border: solid transparent;
  border-width: 5px 3px 0;
  border-top-color: #000;
}

/* content */

.content {
  flex: 1;
  display: flex;
  flex-direction: column;
  gap: 10px;
  padding: 10px;
  background: #cddeff;
  border: solid #99bbe8;
  border-width: 0 1px 1px 0;
}

.panel {
  flex: 1;
  padding: 14px 10px 11px;
  background: #fff;
  border: 1px solid #99bbe8;
}

.intro {
  margin-bottom: 6px;
}

.group {
  min-width: 0;
  padding: 0 10px;
  border: 1px solid #b5b8c8;
}

.group + .group {
  margin-top: 10px;
}

legend {
  padding: 0 2px;
  color: #15428b;
  font-weight: bold;
}

.rules {
  padding-top: 9px;
  padding-bottom: 10px;
}

.rules-layout {
  display: grid;
  grid-template-columns: minmax(0, 1fr) auto;
  gap: 13px 10px;
}

.grid {
  border: 1px solid #99bbe8;
  overflow: hidden;
}

table {
  width: 100%;
  table-layout: fixed;
  border-collapse: separate;
  border-spacing: 0;
}

.col-check { width: 23px; }
.col-name { width: 124px; }
.col-traffic { width: 138px; }
.col-upload { width: 127px; }
.col-interface { width: 82px; }

th {
  height: 24px;
  padding: 3px 6px 0 5px;
  background: linear-gradient(#fbfbfb, #f5f5f5 50%, #eceef0 51%, #ebebec);
  border-right: 1px solid #d0d0d0;
  border-bottom: 1px solid #d0d0d0;
  font-weight: normal;
  text-align: left;
}

th.th-check {
  padding: 0 0 0 8px;
}

th.th-check svg {
  display: block;
  width: 7px;
  height: 13px;
}

td {
  padding: 4px 0 4px 8px;
  border-top: 1px solid #fff;
  border-bottom: 1px solid #ededed;
  border-right: 1px dotted #d4d4d4;
  line-height: 18px;
  vertical-align: top;
  white-space: nowrap;
}

th:last-child, td:last-child {
  border-right: 0;
}

td.check {
  padding: 3px 0 0 6px;
  border-right: 0;
}

td.name {
  padding: 2px 0 0 2px;
}

td.iface {
  padding: 2px 0 0 6px;
}

td label {
  display: block;
}

.reserve td { background: #c9edc7; }
.limit td { background: #dcbfeb; }

.selected td {
  background: #dfe8f6;
  border-top: 1px dotted #a3bae9;
  border-bottom: 1px dotted #a3bae9;
}

.other td {
  padding-bottom: 2px;
  border-bottom: 0;
}

.scrolled td {
  padding-top: 0;
  border-top: 0;
}

.stack {
  display: flex;
  flex-direction: column;
  justify-content: flex-end;
  height: 39px;
  overflow: hidden;
}

.item {
  flex: none;
  display: flex;
  align-items: center;
  gap: 4px;
}

td .item {
  height: 18px;
}

.iface .item {
  gap: 5px;
}

.iface .icon {
  margin-bottom: 4px;
}

.noted {
  justify-content: space-between;
  padding-right: 2px;
}

.noted .icon {
  margin-bottom: 2px;
}

input[type="checkbox"] {
  appearance: none;
  display: block;
  width: 13px;
  height: 13px;
  border: 1px solid #8e8f8f;
  background: linear-gradient(135deg, #cfd3da, #fff);
  box-shadow: inset 0 0 0 1px #f4f4f4;
}

input[type="checkbox"]:checked::before {
  content: "";
  display: block;
  width: 11px;
  height: 11px;
  background: #44639f;
  clip-path: polygon(18% 45%, 34% 42%, 45% 62%, 72% 10%, 88% 10%, 52% 92%, 38% 92%);
}

/* buttons */

.btn {
  display: flex;
  align-items: center;
  justify-content: center;
  gap: 4px;
  min-width: 82px;
  height: 21px;
  padding: 0 4px;
  border: 1px solid #8f8f8f;
  border-radius: 3px;
  background: linear-gradient(#fdfdfd, #f2f2f2 50%, #dcdcdc 51%, #ececec);
  white-space: nowrap;
}

.btn-icon {
  min-width: 22px;
  width: 22px;
}

.btn-icon svg {
  flex: none;
  width: 10px;
  height: 10px;
}

.order {
  display: flex;
  flex-direction: column;
  align-self: center;
  gap: 5px;
  padding-bottom: 12px;
}

.toolbar {
  display: flex;
  gap: 5px;
}

.push {
  margin-left: auto;
  padding: 0 5px;
}

/* lower groups */

.vpn {
  padding: 12px 10px 18px;
}

.option {
  display: flex;
  width: fit-content;
  align-items: center;
  gap: 3px;
  padding-left: 1px;
}

.option input[type="checkbox"] {
  border-color: #5a7396;
  border-radius: 2px;
  background: linear-gradient(#f4f9ff, #b4d4f6);
}

.option input[type="checkbox"]:checked::before {
  background: #14264a;
  clip-path: polygon(10% 42%, 28% 36%, 42% 60%, 78% 0, 100% 0, 54% 96%, 36% 96%);
}

.bandwidth {
  padding: 11px 10px 14px;
}

.link-row {
  display: grid;
  grid-template-columns: 193px 223px 1fr;
  align-items: center;
  height: 21px;
  padding-left: 2px;
}

.backup {
  font-style: italic;
}

.bandwidth .toolbar {
  margin-top: 26px;
}

.actions {
  display: flex;
  justify-content: flex-end;
  gap: 5px;
  padding-right: 1px;
}
```
